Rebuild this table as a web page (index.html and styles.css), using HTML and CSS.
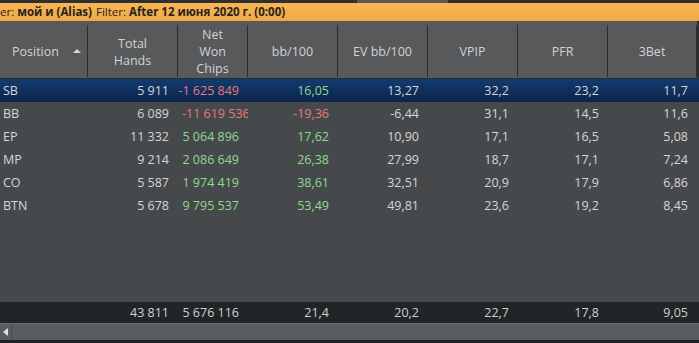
FILE: index.html
```html
<!DOCTYPE html>
<html>
<head>
<meta charset="utf-8">
<link rel="stylesheet" href="styles.css">
</head>
<body>
<div class="app">
  <div class="topbar"><div class="tab"></div></div>
  <div class="filter">er: <b>мой и (Alias)</b><span class="gap"></span>Filter: <b>After 12 июня 2020 г. (0:00)</b></div>
  <div class="grid head">
    <div class="hc pos">Position <span class="arrow"></span></div>
    <div class="hc">Total<br>Hands</div>
    <div class="hc">Net<br>Won<br>Chips</div>
    <div class="hc">bb/100</div>
    <div class="hc">EV bb/100</div>
    <div class="hc">VPIP</div>
    <div class="hc">PFR</div>
    <div class="hc">3Bet</div>
    <div class="hc end"></div>
  </div>
  <div class="rows">
    <div class="grid row sel">
      <div class="c l">SB</div><div class="c">5 911</div><div class="c red">-1 625 849</div><div class="c green">16,05</div><div class="c">13,27</div><div class="c">32,2</div><div class="c">23,2</div><div class="c">11,7</div><div></div>
    </div>
    <div class="grid row">
      <div class="c l">BB</div><div class="c">6 089</div><div class="c red clip">-11 619 536</div><div class="c red">-19,36</div><div class="c">-6,44</div><div class="c">31,1</div><div class="c">14,5</div><div class="c">11,6</div><div></div>
    </div>
    <div class="grid row">
      <div class="c l">EP</div><div class="c">11 332</div><div class="c green">5 064 896</div><div class="c green">17,62</div><div class="c">10,90</div><div class="c">17,1</div><div class="c">16,5</div><div class="c">5,08</div><div></div>
    </div>
    <div class="grid row">
      <div class="c l">MP</div><div class="c">9 214</div><div class="c green">2 086 649</div><div class="c green">26,38</div><div class="c">27,99</div><div class="c">18,7</div><div class="c">17,1</div><div class="c">7,24</div><div></div>
    </div>
    <div class="grid row">
      <div class="c l">CO</div><div class="c">5 587</div><div class="c green">1 974 419</div><div class="c green">38,61</div><div class="c">32,51</div><div class="c">20,9</div><div class="c">17,9</div><div class="c">6,86</div><div></div>
    </div>
    <div class="grid row">
      <div class="c l">BTN</div><div class="c">5 678</div><div class="c green">9 795 537</div><div class="c green">53,49</div><div class="c">49,81</div><div class="c">23,6</div><div class="c">19,2</div><div class="c">8,45</div><div></div>
    </div>
  </div>
  <div class="grid totals">
    <div class="c l"></div><div class="c">43 811</div><div class="c">5 676 116</div><div class="c">21,4</div><div class="c">20,2</div><div class="c">22,7</div><div class="c">17,8</div><div class="c">9,05</div><div></div>
  </div>
  <div class="scroll">
    <div class="sbtn"><span class="larrow"></span></div>
    <div class="track"></div>
  </div>
  <div class="bottom"></div>
</div>
</body>
</html>
```

FILE: styles.css
```css
html, body {
  margin: 0;
  padding: 0;
  background: #46494b;
}
.app {
  width: 699px;
  height: 343px;
  overflow: hidden;
  display: flex;
  flex-direction: column;
  font-family: "Open Sans", "Noto Sans", sans-serif;
  font-size: 12px;
  color: #d6d6d6;
}
.topbar {
  height: 3px;
  background: #2e3032;
  display: flex;
}
.tab {
  margin-left: 357px;
  width: 91px;
  background: #55585a;
}
.filter {
  height: 18px;
  line-height: 18px;
  background: linear-gradient(#f8b654, #f1a845);
  color: #262321;
  font-size: 11.5px;
  white-space: nowrap;
}
.filter b { font-weight: 700; }
.gap { display: inline-block; width: 4px; }
.grid {
  display: grid;
  grid-template-columns: 88px 90px 70px 90px 90px 90px 90px 89px 2px;
}
.head {
  height: 57px;
  background: #57595b;
  border-bottom: 1px solid #1d2b3e;
}
.hc {
  display: flex;
  align-items: center;
  justify-content: center;
  text-align: center;
  line-height: 17px;
  font-size: 12.5px;
  color: #d2d3d4;
  border-right: 1px solid #2a2c2e;
  margin: 4px 0;
  padding-top: 1px;
}
.hc.pos {
  justify-content: flex-start;
  padding-left: 12px;
}
.hc.end { border-right: none; background: #2a2c2e; margin: 0; }
.arrow {
  display: inline-block;
  width: 0;
  height: 0;
  border-left: 4px solid transparent;
  border-right: 4px solid transparent;
  border-bottom: 4px solid #d8d8d8;
  margin-left: 14px;
  margin-bottom: 2px;
}
.rows {
  height: 223px;
  background: #46494b;
}
.row {
  height: 23px;
  line-height: 23px;
}
.row.sel {
  background: linear-gradient(#143b6e, #0b244c);
}
.c {
  text-align: right;
  padding-right: 9px;
  white-space: nowrap;
  overflow: hidden;
  font-size: 12.5px;
}
.c.l {
  text-align: left;
  padding-left: 3px;
  padding-right: 0;
}
.c.clip {
  text-align: left;
  padding-left: 4px;
  padding-right: 0;
}
.green { color: #8fda8c; }
.red { color: #e47b7b; }
.totals {
  height: 21px;
  line-height: 21px;
  background: #222527;
  color: #d0d0d0;
}
.scroll {
  height: 17px;
  display: flex;
  background: #5a5d5f;
  border-top: 1px solid #6a6d6f;
  box-sizing: border-box;
}
.sbtn {
  width: 11px;
  display: flex;
  align-items: center;
  justify-content: center;
  border-right: 1px solid #4a4d4f;
}
.larrow {
  width: 0;
  height: 0;
  border-top: 4px solid transparent;
  border-bottom: 4px solid transparent;
  border-right: 5px solid #e0e0e0;
}
.track { flex: 1; }
.bottom {
  height: 3px;
  background: #1f2123;
}
```
